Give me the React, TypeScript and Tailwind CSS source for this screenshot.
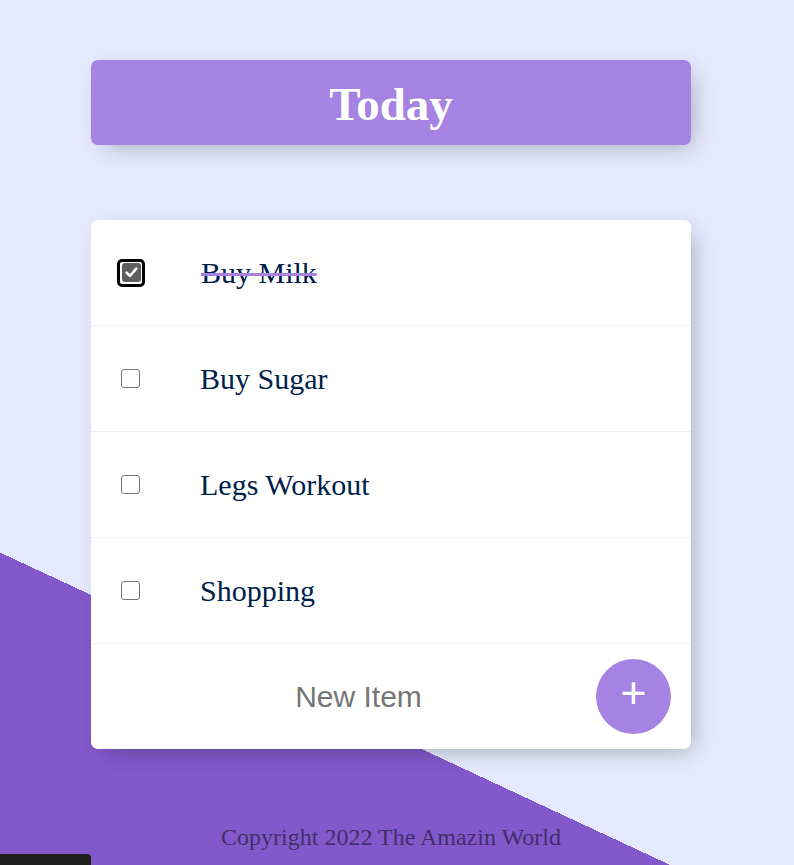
import React from 'react';

const items = [
  { text: 'Buy Milk', done: true },
  { text: 'Buy Sugar', done: false },
  { text: 'Legs Workout', done: false },
  { text: 'Shopping', done: false },
];

const serif = { fontFamily: '"Liberation Serif", "Times New Roman", serif' };

const CheckBox = ({ checked }: { checked: boolean }) => {
  if (checked) {
    return (
      <div className="ml-[26px] mr-[26px] w-[28px] h-[28px] rounded-[5px] border-[3px] border-black bg-white flex items-center justify-center">
        <div className="w-[19px] h-[19px] rounded-[3px] bg-[#5f5f5f] flex items-center justify-center">
          <svg width="15" height="15" viewBox="0 0 14 14">
            <path d="M2.5 7.2 L5.6 10.2 L11.5 3.4" fill="none" stroke="#fff" strokeWidth="2.4" strokeLinecap="round" strokeLinejoin="round" />
          </svg>
        </div>
      </div>
    );
  }
  return (
    <div className="ml-[30px] mr-[30px] w-[19px] h-[19px] rounded-[3px] border-[1.5px] border-[#767676] bg-white" />
  );
};

export default function App() {
  return (
    <div className="relative w-full h-[865px] overflow-hidden bg-[linear-gradient(25deg,#8358ca_25.3%,#e4e9fd_25.3%)]">
      <div className="w-[782px] flex flex-col items-center pt-[60px]">
        <div className="w-[600px] h-[85px] rounded-[7px] bg-[#a683e3] shadow-[7px_7px_22px_-7px_rgba(0,0,0,0.3)] flex items-center justify-center">
          <h1 className="text-[47px] font-bold text-white leading-none pt-[3px]" style={serif}>
            Today
          </h1>
        </div>

        <div className="mt-[75px] w-[600px] bg-white rounded-[7px] shadow-[7px_7px_22px_-7px_rgba(0,0,0,0.3)]">
          {items.map((item) => (
            <div key={item.text} className="h-[106px] border-b border-[#f1f1f1] flex items-center">
              <CheckBox checked={item.done} />
              <p
                className={`ml-[30px] text-[30px] text-[#00204a] ${item.done ? 'line-through decoration-[#a683e3] decoration-3' : ''}`}
                style={serif}
              >
                {item.text}
              </p>
            </div>
          ))}
          <form className="h-[105px] flex items-center pl-[30px]" onSubmit={(e) => e.preventDefault()}>
            <input
              type="text"
              placeholder="New Item"
              className="w-[475px] h-[90px] text-center text-[30px] outline-none placeholder:text-[#757575] text-[#00204a]"
              style={{ fontFamily: '"Liberation Sans", Arial, sans-serif' }}
            />
            <button
              type="submit"
              className="w-[75px] h-[75px] rounded-full bg-[#a683e3] text-white text-[45px] leading-none pb-[9px] flex items-center justify-center"
              style={{ fontFamily: '"Liberation Sans", Arial, sans-serif' }}
            >
              +
            </button>
          </form>
        </div>

        <footer className="mt-[70px] text-[24px] text-black/50" style={serif}>
          Copyright 2022 The Amazin World
        </footer>
      </div>

      <div className="absolute bottom-0 left-0 w-[91px] h-[11px] bg-[#1f1f1f] rounded-tr-[4px]" />
    </div>
  );
}
